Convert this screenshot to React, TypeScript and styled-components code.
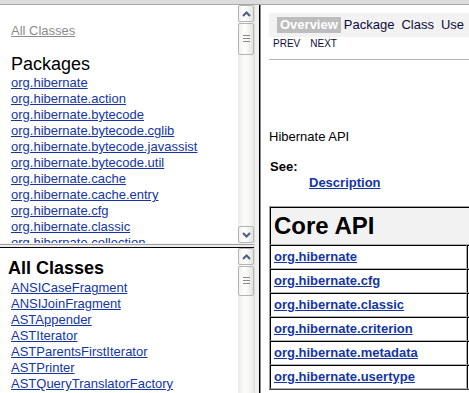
import React from "react";
import styled, { createGlobalStyle } from "styled-components";

const GlobalStyle = createGlobalStyle`
  html, body {
    margin: 0;
    padding: 0;
    background: #fff;
  }
  body {
    font-family: "Liberation Sans", Arial, sans-serif;
  }
`;

const packages = [
    "org.hibernate",
    "org.hibernate.action",
    "org.hibernate.bytecode",
    "org.hibernate.bytecode.cglib",
    "org.hibernate.bytecode.javassist",
    "org.hibernate.bytecode.util",
    "org.hibernate.cache",
    "org.hibernate.cache.entry",
    "org.hibernate.cfg",
    "org.hibernate.classic",
    "org.hibernate.collection",
    "org.hibernate.connection",
];

const classes = [
    "ANSICaseFragment",
    "ANSIJoinFragment",
    "ASTAppender",
    "ASTIterator",
    "ASTParentsFirstIterator",
    "ASTPrinter",
    "ASTQueryTranslatorFactory",
    "AbstractAuxiliaryDatabaseObject",
];

const coreApi = [
    "org.hibernate",
    "org.hibernate.cfg",
    "org.hibernate.classic",
    "org.hibernate.criterion",
    "org.hibernate.metadata",
    "org.hibernate.usertype",
];

const navItems = ["Overview", "Package", "Class", "Use", "Tree", "Deprecated", "Index", "Help"];

const Window = styled.div`
    width: 469px;
    height: 393px;
    overflow: hidden;
    display: flex;
    flex-direction: column;
    background: #fff;
`;

const TopEdge = styled.div`
    flex: 0 0 5px;
    box-sizing: border-box;
    background: #dcdcdc;
    border-bottom: 1px solid #a8a8a8;
`;

const Frames = styled.div`
    flex: 1;
    display: flex;
    min-height: 0;
`;

const LeftColumn = styled.div`
    flex: 0 0 254px;
    display: flex;
    flex-direction: column;
`;

const Frame = styled.div<{ $height: number }>`
    flex: 0 0 ${(p) => p.$height}px;
    display: flex;
    background: #fff;
    overflow: hidden;
`;

const FrameBody = styled.div<{ $pad: string }>`
    flex: 1;
    padding: ${(p) => p.$pad};
    overflow: hidden;
    white-space: nowrap;
`;

const HSplitter = styled.div`
    flex: 0 0 5px;
    background: linear-gradient(#f4f4f4 0 1px, #a0a0a0 1px 2px, #ececec 2px 4px, #000 4px 5px);
`;

const VSplitter = styled.div`
    flex: 0 0 7px;
    background: linear-gradient(to right, #dedede 0 1px, #efefef 1px 5px, #000 5px 6px, #8a8a8a 6px 7px);
`;

const ScrollBar = styled.div`
    flex: 0 0 16px;
    display: flex;
    flex-direction: column;
    background: linear-gradient(to right, #ebebe6, #fbfbfa 35%, #f7f7f4 70%, #e9e9e4);
`;

const ScrollButton = styled.div`
    flex: 0 0 17px;
    box-sizing: border-box;
    border: 1px solid #b4b4b4;
    border-radius: 2px;
    background: linear-gradient(to right, #f0f0ee, #ffffff 40%, #e4e4e0);
    display: flex;
    align-items: center;
    justify-content: center;
`;

const Track = styled.div`
    flex: 1;
    display: flex;
    flex-direction: column;
`;

const Thumb = styled.div<{ $top: number; $size: number }>`
    margin-top: ${(p) => p.$top}px;
    height: ${(p) => p.$size}px;
    box-sizing: border-box;
    border: 1px solid #b4b4b4;
    border-radius: 2px;
    background: linear-gradient(to right, #f0f0ee, #ffffff 40%, #e4e4e0);
    display: flex;
    align-items: center;
    justify-content: center;
`;

const Grip = styled.div`
    width: 7px;
    height: 9px;
    background: repeating-linear-gradient(#8a8a8a 0 1px, transparent 1px 3px);
`;

const FrameLink = styled.a<{ $muted?: boolean }>`
    display: block;
    font-size: 13px;
    line-height: 16px;
    color: ${(p) => (p.$muted ? "#8c8c8c" : "#1436a5")};
    text-decoration: underline;
`;

const PackagesTitle = styled.div`
    font-size: 18px;
    line-height: 21px;
    margin-top: 15px;
    color: #000;
`;

const ClassesTitle = styled.div`
    font-size: 18px;
    line-height: 20px;
    font-weight: bold;
    color: #000;
    margin: 0 0 2px -3px;
`;

const RightFrame = styled.div`
    flex: 0 0 640px;
    background: #fff;
    overflow: hidden;
`;

const RightBody = styled.div`
    padding: 8px;
    font-size: 13px;
    line-height: 16px;
    color: #000;
    white-space: nowrap;
`;

const NavBar = styled.div`
    background: #f2f2f2;
    display: flex;
    align-items: center;
    gap: 3px;
    padding: 4px 8px;
`;

const NavCell = styled.span<{ $active?: boolean }>`
    font-size: 13px;
    line-height: 16px;
    padding: ${(p) => (p.$active ? "0 3px" : "0 4px 0 0")};
    background: ${(p) => (p.$active ? "#bdbdbd" : "transparent")};
    color: ${(p) => (p.$active ? "#fff" : "#0d0d3a")};
    font-weight: ${(p) => (p.$active ? "bold" : "normal")};
`;

const SubNav = styled.div`
    padding: 1px 4px 0;
    font-size: 10px;
    line-height: 12px;
    color: #0d0d3a;
    display: flex;
    gap: 10px;
`;

const Rule = styled.div`
    margin-top: 9px;
    border-top: 1px solid #b8b8b8;
`;

const Summary = styled.div`
    margin-top: 69px;
`;

const SeeLabel = styled.div`
    margin-top: 14px;
    font-weight: bold;
    padding-left: 1px;
`;

const SeeLink = styled.a`
    display: block;
    margin-left: 40px;
    font-weight: bold;
    color: #1436a5;
    text-decoration: underline;
`;

const SummaryTable = styled.table`
    margin-top: 15px;
    width: 600px;
    border-collapse: separate;
    border-spacing: 0;
    border: 1px solid;
    border-color: #a0a0a0 #404040 #404040 #a0a0a0;
`;

const Cell = styled.td<{ $width?: number }>`
    border: 1px solid;
    border-color: #000 #b0b0b0 #b0b0b0 #000;
    padding: 3px;
    width: ${(p) => (p.$width ? `${p.$width}px` : "auto")};
    box-sizing: border-box;
`;

const HeaderCell = styled(Cell)`
    background: #f2f2f2;
    font-size: 24px;
    line-height: 30px;
    font-weight: bold;
`;

const RowLink = styled.a`
    font-weight: bold;
    color: #1436a5;
    text-decoration: underline;
    line-height: 16px;
`;

function Chevron({ up }: { up?: boolean }) {
    return (
        <svg width="9" height="6" viewBox="0 0 9 6">
            <path
                d={up ? "M1 5 L4.5 1.5 L8 5" : "M1 1 L4.5 4.5 L8 1"}
                fill="none"
                stroke="#4d5d7d"
                strokeWidth="2"
            />
        </svg>
    );
}

function Scroller({ thumbTop, thumbSize }: { thumbTop: number; thumbSize: number }) {
    return (
        <ScrollBar>
            <ScrollButton>
                <Chevron up />
            </ScrollButton>
            <Track>
                <Thumb $top={thumbTop} $size={thumbSize}>
                    <Grip />
                </Thumb>
            </Track>
            <ScrollButton>
                <Chevron />
            </ScrollButton>
        </ScrollBar>
    );
}

export default function App() {
    return (
        <Window>
            <GlobalStyle />
            <TopEdge />
            <Frames>
                <LeftColumn>
                    <Frame $height={238}>
                        <FrameBody $pad="18px 0 0 11px">
                            <FrameLink $muted>All Classes</FrameLink>
                            <PackagesTitle>Packages</PackagesTitle>
                            {packages.map((p) => (
                                <FrameLink key={p}>{p}</FrameLink>
                            ))}
                        </FrameBody>
                        <Scroller thumbTop={1} thumbSize={32} />
                    </Frame>
                    <HSplitter />
                    <Frame $height={400}>
                        <FrameBody $pad="10px 0 0 11px">
                            <ClassesTitle>All Classes</ClassesTitle>
                            {classes.map((c) => (
                                <FrameLink key={c}>{c}</FrameLink>
                            ))}
                        </FrameBody>
                        <Scroller thumbTop={1} thumbSize={30} />
                    </Frame>
                </LeftColumn>
                <VSplitter />
                <RightFrame>
                    <RightBody>
                        <NavBar>
                            {navItems.map((n, i) => (
                                <NavCell key={n} $active={i === 0}>
                                    {n}
                                </NavCell>
                            ))}
                        </NavBar>
                        <SubNav>
                            <span>PREV</span>
                            <span>NEXT</span>
                        </SubNav>
                        <Rule />
                        <Summary>Hibernate API</Summary>
                        <SeeLabel>See:</SeeLabel>
                        <SeeLink>Description</SeeLink>
                        <SummaryTable>
                            <tbody>
                                <tr>
                                    <HeaderCell colSpan={2}>Core API</HeaderCell>
                                </tr>
                                {coreApi.map((p) => (
                                    <tr key={p}>
                                        <Cell $width={197}>
                                            <RowLink>{p}</RowLink>
                                        </Cell>
                                        <Cell>&nbsp;</Cell>
                                    </tr>
                                ))}
                            </tbody>
                        </SummaryTable>
                    </RightBody>
                </RightFrame>
            </Frames>
        </Window>
    );
}
